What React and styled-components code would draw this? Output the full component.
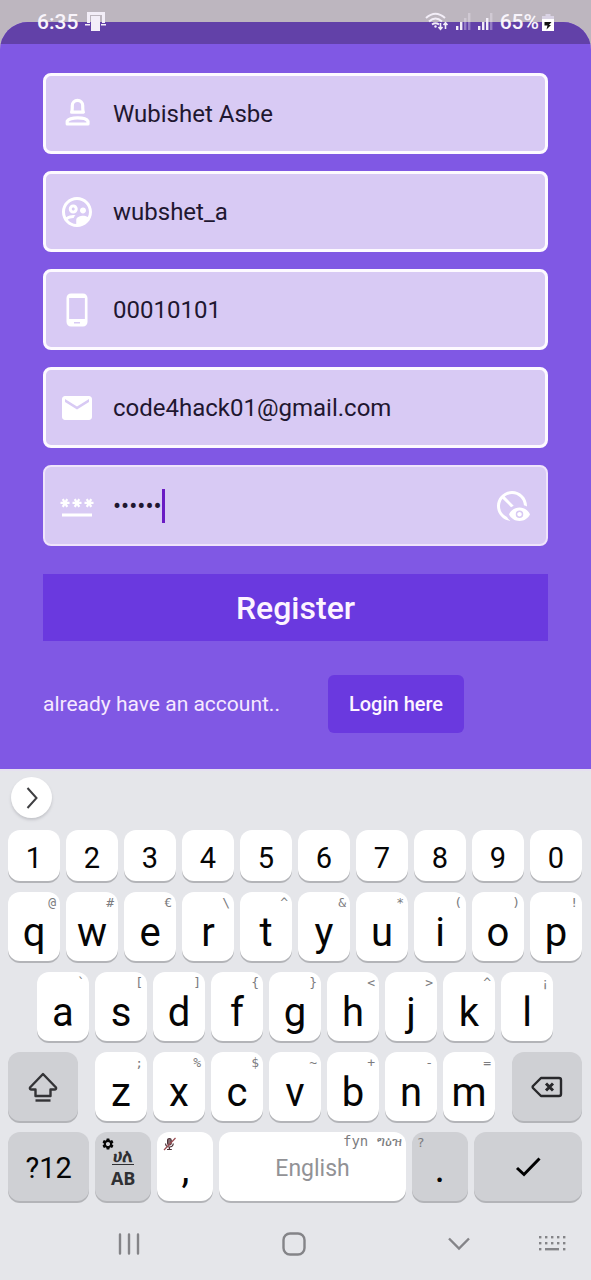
import React from "react";
import styled, { createGlobalStyle } from "styled-components";
import {
  MdOutlineSupervisedUserCircle,
  MdPhoneAndroid,
  MdMail,
  MdPassword,
  MdDisabledVisible,
  MdSettings,
} from "react-icons/md";

const GlobalStyle = createGlobalStyle`
  *, *::before, *::after { box-sizing: border-box; }
  body { margin: 0; background: #bdb6bf; font-family: Roboto, "Liberation Sans", sans-serif; }
  button, input { font-family: inherit; }
  button { border: 0; padding: 0; cursor: pointer; }
  svg { display: block; flex: none; }
`;

const Screen = styled.div`
  position: relative;
  display: flex;
  flex-direction: column;
  min-height: 100vh;
  background: #bdb6bf;
`;

const StatusBar = styled.header`
  position: absolute;
  inset: 0 0 auto 0;
  display: flex;
  align-items: center;
  justify-content: space-between;
  height: 44px;
  padding: 0 37px;
  color: #f8f4fb;
  font-size: 21px;
  font-weight: 500;
`;

const StatusGroup = styled.div`
  display: flex;
  align-items: center;
  gap: ${(p) => p.$gap}px;
`;

const Sheet = styled.main`
  margin-top: 22px;
  border-radius: 28px 28px 0 0;
  overflow: hidden;
  background: #8058e4;
`;

const SheetBand = styled.div`
  height: 22px;
  background: #6241a8;
`;

const Form = styled.form`
  padding: 29px 43px 36px;
`;

const Fields = styled.div`
  display: flex;
  flex-direction: column;
  gap: 17px;
`;

const Field = styled.label`
  display: flex;
  align-items: center;
  height: 81px;
  padding: ${(p) => (p.$active ? "0 16px 0 14px" : "0 16px 0 13px")};
  border: ${(p) => (p.$active ? "2px solid #efe4fb" : "3px solid #fdfaff")};
  border-radius: 8px;
  background: #d8caf4;
  color: #fff;
`;

const FieldInput = styled.input`
  flex: ${(p) => (p.$hug ? "none" : "1")};
  field-sizing: ${(p) => (p.$hug ? "content" : "fixed")};
  min-width: 0;
  margin-left: 18px;
  padding: 0;
  border: 0;
  outline: 0;
  background: transparent;
  color: #1f1730;
  font-size: 24px;
  line-height: 32px;
`;

const Caret = styled.span`
  width: 3px;
  height: 34px;
  background: #6a1bc4;
`;

const IconButton = styled.button`
  margin-left: auto;
  background: transparent;
  color: #fff;
`;

const RegisterButton = styled.button`
  display: block;
  width: 100%;
  height: 67px;
  margin-top: 28px;
  background: #6a39df;
  color: #fdf4ff;
  font-size: 32px;
  font-weight: 500;
`;

const LoginRow = styled.div`
  display: flex;
  align-items: center;
  gap: 48px;
  margin-top: 34px;
  color: #f6e9ff;
  font-size: 21px;
`;

const LoginButton = styled.button`
  height: 58px;
  padding: 0 21px;
  border-radius: 6px;
  background: #6a39df;
  color: #fdf4ff;
  font-size: 20px;
  font-weight: 500;
`;

const Keyboard = styled.section`
  flex: 1;
  padding: 0 9px 0 8px;
  border-top: 2px solid #e6e0f1;
  background: #e5e6ea;
`;

const Toolbar = styled.div`
  display: flex;
  align-items: center;
  height: 59px;
  padding: 0 3px 6px;
`;

const RoundButton = styled.button`
  display: grid;
  place-items: center;
  width: 41px;
  height: 41px;
  border-radius: 50%;
  background: #fff;
  box-shadow: 0 2px 3px #c3c4c9;
`;

const Rows = styled.div`
  display: flex;
  flex-direction: column;
  gap: 11px;
`;

const KeyRow = styled.div`
  display: flex;
  gap: ${(p) => p.$gap || 6}px;
  padding: 0 ${(p) => p.$inset || 0}px;
`;

const KeyGroup = styled.div`
  display: flex;
  flex: 400 1 0;
  gap: 6px;
`;

const KeyCap = styled.button`
  position: relative;
  display: flex;
  align-items: center;
  justify-content: center;
  flex: ${(p) => p.$weight || 52} 1 0;
  min-width: 0;
  height: ${(p) => (p.$short ? 51 : 69)}px;
  padding-top: ${(p) => p.$drop || 0}px;
  border-radius: 12px;
  background: ${(p) => (p.$dim ? "#cfd0d4" : "#fff")};
  box-shadow: 0 2px 0 #b3b4b8;
  color: ${(p) => (p.$muted ? "#929296" : "#050505")};
  font-size: ${(p) => p.$size || 40}px;
  line-height: 1;
`;

const Hint = styled.span`
  position: absolute;
  top: ${(p) => (p.$size ? 2 : 4)}px;
  ${(p) => (p.$left ? "left: 5px;" : "right: 4px;")}
  color: #7c7c80;
  font-family: "DejaVu Sans Mono", "Noto Sans", monospace;
  font-size: ${(p) => p.$size || 13}px;
  line-height: 14px;
  white-space: pre;
`;

const Corner = styled.span`
  position: absolute;
  top: 5px;
  left: 6px;
`;

const LanguageLabel = styled.span`
  display: flex;
  flex-direction: column;
  align-items: center;
  gap: 3px;
  color: #303033;
  font-family: "Open Sans", "Noto Sans", sans-serif;
  font-size: 18px;
  font-weight: 700;
  line-height: 20px;
`;

const LanguageTop = styled.span`
  padding: 0 1px;
  border-bottom: 1px solid #303033;
  line-height: 18px;
`;

const NavBar = styled.nav`
  display: flex;
  align-items: center;
  gap: 67px;
  height: 79px;
  padding: 6px 16px 0 110px;
`;

const NavMain = styled.div`
  display: flex;
  flex: 1;
  align-items: center;
  justify-content: space-between;
`;

const NavButton = styled.button`
  background: transparent;
`;

const PersonIcon = () => (
  <svg width="36" height="36" viewBox="0 0 36 36" fill="none" stroke="#fff" strokeWidth="3.2" strokeLinejoin="round">
    <path d="M12.600 16.200C13.500 14.500 13.200 12.500 13.300 9.600A5.200 5.200 0 0 1 23.700 9.600C23.800 12.500 23.500 14.500 24.400 16.200Z" />
    <path d="M8.200 28V25.200C11 20.800 26.500 20.800 29 25.200V28Z" />
  </svg>
);

const TouchIcon = () => (
  <svg width="22" height="20" viewBox="0 0 22 20" fill="#f3eef8">
    <path d="M2 0H20V11H17V3H5V11H2Z" />
    <path d="M6 4H15V19H6Z" />
    <path d="M0 12H5V13.500H0ZM16 12H21V13.500H16Z" />
  </svg>
);

const WifiIcon = () => (
  <svg width="24" height="20" viewBox="0 0 24 20" fill="none" stroke="#f3eef8" strokeWidth="2">
    <path d="M1 6Q10.500 -2.500 20 6M4 9.500Q10.500 3.500 17 9.500M7 12.500Q10.500 10 14 12.500" />
    <circle cx="10.500" cy="14.500" r="1.200" fill="#f3eef8" stroke="none" />
    <path d="M15.500 11V17M13.500 15L15.500 17.300L17.500 15M20.500 17V11M18.500 13L20.500 10.800L22.500 13" strokeWidth="1.600" />
  </svg>
);

const SignalIcon = ({ bars }) => (
  <svg width="15" height="18" viewBox="0 0 15 18" fill="#f3eef8">
    {[4, 8, 12, 17].map((h, i) => (
      <rect key={h} x={i * 4} y={17 - h} width="2.400" height={h} opacity={i < bars ? 1 : 0.35} />
    ))}
  </svg>
);

const BatteryIcon = () => (
  <svg width="12" height="17" viewBox="0 0 12 17">
    <path d="M3.500 0H8.500V2H12V6H0V2H3.500Z" fill="#d9d2e4" />
    <path d="M0 5H12V17H0Z" fill="#fff" />
    <path d="M2.500 8H9.500L7 11H9L4.500 15.500L5.500 11.500H2.500Z" fill="#111" />
  </svg>
);

const ChevronIcon = () => (
  <svg width="12" height="22" viewBox="0 0 12 22" fill="none" stroke="#3f3f42" strokeWidth="2">
    <path d="M1.500 1L10.500 11L1.500 21" />
  </svg>
);

const ShiftIcon = () => (
  <svg width="30" height="30" viewBox="0 0 30 30" fill="none" stroke="#333336" strokeWidth="2.400" strokeLinejoin="round">
    <path d="M15 2L28 15.500Q28.500 17.500 26.500 17.500H22.500V24H7.500V17.500H3.500Q1.500 17.500 2 15.500Z" />
    <path d="M7.500 28.500H22.500" />
  </svg>
);

const BackspaceIcon = () => (
  <svg width="32" height="22" viewBox="0 0 32 22" fill="none" stroke="#28282b" strokeWidth="2.400" strokeLinejoin="round">
    <path d="M10 2H28Q30 2 30 4V18Q30 20 28 20H10L2 12Q1.300 11 2 10Z" />
    <path d="M15 7.500L22 14.500M22 7.500L15 14.500" strokeWidth="3" />
  </svg>
);

const CheckIcon = () => (
  <svg width="26" height="20" viewBox="0 0 26 20" fill="none" stroke="#000" strokeWidth="3">
    <path d="M2 11L9 17.500L24.500 1.500" />
  </svg>
);

const MicOffIcon = () => (
  <svg width="13" height="14" viewBox="0 0 13 14" fill="none" stroke="#4a3036" strokeWidth="1.200">
    <rect x="4.600" y="1.500" width="3.600" height="6.500" rx="1.800" fill="#8a7075" />
    <path d="M2.500 6.500Q2.800 10 6.400 10Q10 10 10.300 6.500M6.400 10V12.500M4 12.500H8.800" />
    <path d="M1 13L12.500 1" stroke="#9b4a50" />
  </svg>
);

const RecentsIcon = () => (
  <svg width="22" height="22" viewBox="0 0 22 22" stroke="#848488" strokeWidth="2.400" strokeLinecap="round">
    <path d="M2 1.500V20.500M11 1.500V20.500M20 1.500V20.500" />
  </svg>
);

const HomeIcon = () => (
  <svg width="24" height="24" viewBox="0 0 24 24" fill="none" stroke="#848488" strokeWidth="2.400">
    <rect x="1.500" y="1.500" width="21" height="21" rx="6.500" />
  </svg>
);

const DownIcon = () => (
  <svg width="24" height="14" viewBox="0 0 24 14" fill="none" stroke="#848488" strokeWidth="2.400">
    <path d="M2 1.500L12 11.500L22 1.500" />
  </svg>
);

const KeyboardIcon = () => (
  <svg width="28" height="15" viewBox="0 0 28 15" fill="#848488">
    {[1, 7, 13, 19, 25].map((x) => (
      <g key={x}>
        <rect x={x} y="0" width="2.400" height="2.400" />
        <rect x={x} y="6" width="2.400" height="2.400" />
      </g>
    ))}
    <rect x="1" y="12" width="2.400" height="2.400" />
    <rect x="7" y="12" width="14" height="2.400" />
    <rect x="25" y="12" width="2.400" height="2.400" />
  </svg>
);

const fields = [
  { name: "name", label: "Full name", value: "Wubishet Asbe", icon: <PersonIcon /> },
  { name: "username", label: "User name", value: "wubshet_a", icon: <MdOutlineSupervisedUserCircle size={36} /> },
  { name: "phone", label: "Phone", value: "00010101", icon: <MdPhoneAndroid size={36} /> },
  { name: "email", label: "Email", value: "code4hack01@gmail.com", icon: <MdMail size={36} /> },
];

const topLetters = [["q", "@"], ["w", "#"], ["e", "€"], ["r", "\\"], ["t", "^"], ["y", "&"], ["u", "*"], ["i", "("], ["o", ")"], ["p", "!"]];
const homeLetters = [["a", "`"], ["s", "["], ["d", "]"], ["f", "{"], ["g", "}"], ["h", "<"], ["j", ">"], ["k", "^"], ["l", "¡"]];
const lowLetters = [["z", ";"], ["x", "%"], ["c", "$"], ["v", "~"], ["b", "+"], ["n", "-"], ["m", "="]];

const LetterKeys = ({ keys }) =>
  keys.map(([letter, hint]) => (
    <KeyCap key={letter} type="button" $drop={12}>
      {letter}
      <Hint>{hint}</Hint>
    </KeyCap>
  ));

export default function App() {
  return (
    <Screen>
      <GlobalStyle />
      <Sheet>
        <SheetBand />
        <Form onSubmit={(e) => e.preventDefault()}>
          <Fields>
            {fields.map((f) => (
              <Field key={f.name}>
                {f.icon}
                <FieldInput name={f.name} aria-label={f.label} defaultValue={f.value} />
              </Field>
            ))}
            <Field $active>
              <MdPassword size={36} />
              <FieldInput $hug type="password" name="password" aria-label="Password" defaultValue="secret" />
              <Caret />
              <IconButton type="button" aria-label="Show password">
                <MdDisabledVisible size={36} />
              </IconButton>
            </Field>
          </Fields>
          <RegisterButton type="submit">Register</RegisterButton>
          <LoginRow>
            <span>already have an account..</span>
            <LoginButton type="button">Login here</LoginButton>
          </LoginRow>
        </Form>
      </Sheet>

      <StatusBar>
        <StatusGroup $gap={7}>
          <span>6:35</span>
          <TouchIcon />
        </StatusGroup>
        <StatusGroup $gap={3}>
          <StatusGroup $gap={7}>
            <WifiIcon />
            <SignalIcon bars={2} />
            <SignalIcon bars={3} />
            <span>65%</span>
          </StatusGroup>
          <BatteryIcon />
        </StatusGroup>
      </StatusBar>

      <Keyboard>
        <Toolbar>
          <RoundButton type="button" aria-label="Expand toolbar">
            <ChevronIcon />
          </RoundButton>
        </Toolbar>
        <Rows>
          <KeyRow>
            {[..."1234567890"].map((d) => (
              <KeyCap key={d} type="button" $short $size={29} $drop={6}>
                {d}
              </KeyCap>
            ))}
          </KeyRow>
          <KeyRow>
            <LetterKeys keys={topLetters} />
          </KeyRow>
          <KeyRow $inset={29}>
            <LetterKeys keys={homeLetters} />
          </KeyRow>
          <KeyRow $gap={17}>
            <KeyCap type="button" aria-label="Shift" $weight={70} $dim>
              <ShiftIcon />
            </KeyCap>
            <KeyGroup>
              <LetterKeys keys={lowLetters} />
            </KeyGroup>
            <KeyCap type="button" aria-label="Backspace" $weight={70} $dim>
              <BackspaceIcon />
            </KeyCap>
          </KeyRow>
          <KeyRow>
            <KeyCap type="button" $weight={81} $size={29} $drop={4} $dim>
              ?12
            </KeyCap>
            <KeyCap type="button" $weight={56} $dim>
              <Corner>
                <MdSettings size={14} />
              </Corner>
              <LanguageLabel>
                <LanguageTop>ሀለ</LanguageTop>
                <span>AB</span>
              </LanguageLabel>
            </KeyCap>
            <KeyCap type="button" $weight={56} $drop={4}>
              <Corner>
                <MicOffIcon />
              </Corner>
              ,
            </KeyCap>
            <KeyCap type="button" $weight={186} $size={23} $drop={4} $muted>
              English
              <Hint $size={14}>fyn ግዕዝ</Hint>
            </KeyCap>
            <KeyCap type="button" $weight={56} $drop={4} $dim>
              <Hint $left>?</Hint>
              .
            </KeyCap>
            <KeyCap type="button" aria-label="Done" $weight={108} $dim>
              <CheckIcon />
            </KeyCap>
          </KeyRow>
        </Rows>
        <NavBar>
          <NavMain>
            <NavButton type="button" aria-label="Recent apps"><RecentsIcon /></NavButton>
            <NavButton type="button" aria-label="Home"><HomeIcon /></NavButton>
            <NavButton type="button" aria-label="Hide keyboard"><DownIcon /></NavButton>
          </NavMain>
          <NavButton type="button" aria-label="Choose keyboard"><KeyboardIcon /></NavButton>
        </NavBar>
      </Keyboard>
    </Screen>
  );
}
